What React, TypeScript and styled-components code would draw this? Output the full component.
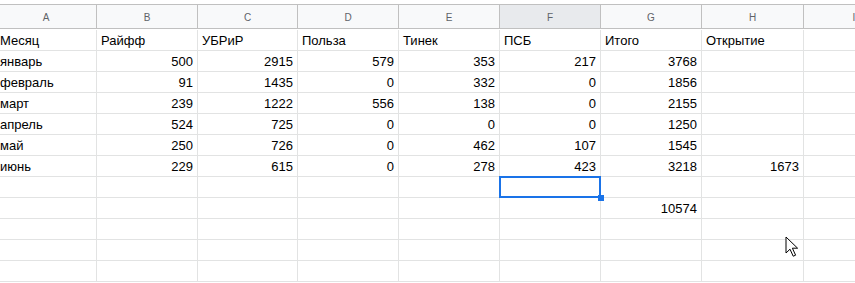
import React from 'react';
import styled, { createGlobalStyle } from 'styled-components';

const GlobalStyle = createGlobalStyle`
html, body {
    margin: 0;
    padding: 0;
    background: #ffffff;
}
* { box-sizing: border-box; }
`;

const COLS = ['A', 'B', 'C', 'D', 'E', 'F', 'G', 'H', 'I'];
const WIDTHS = [101, 101, 100, 101, 101, 101, 101, 102, 101];

type Value = string | number | null;

const ROWS: Value[][] = [
    ['Месяц', 'Райфф', 'УБРиР', 'Польза', 'Тинек', 'ПСБ', 'Итого', 'Открытие', null],
    ['январь', 500, 2915, 579, 353, 217, 3768, null, null],
    ['февраль', 91, 1435, 0, 332, 0, 1856, null, null],
    ['март', 239, 1222, 556, 138, 0, 2155, null, null],
    ['апрель', 524, 725, 0, 0, 0, 1250, null, null],
    ['май', 250, 726, 0, 462, 107, 1545, null, null],
    ['июнь', 229, 615, 0, 278, 423, 3218, 1673, null],
    [null, null, null, null, null, null, null, null, null],
    [null, null, null, null, null, null, 10574, null, null],
    [null, null, null, null, null, null, null, null, null],
    [null, null, null, null, null, null, null, null, null],
    [null, null, null, null, null, null, null, null, null],
];

// active cell: row index 7, column F
const SELECTED = { row: 7, col: 5 };

function Sheet() {
    return (
        <Viewport>
            <GlobalStyle />
            <TopStrip />
            <Grid widths={WIDTHS}>
                {COLS.map((c, i) => (
                    <ColHeader key={c} active={i === SELECTED.col}>{c}</ColHeader>
                ))}
                {ROWS.map((row, r) =>
                    row.map((v, c) => (
                        <Cell
                            key={r + '-' + c}
                            numeric={typeof v === 'number'}
                            selected={r === SELECTED.row && c === SELECTED.col}
                        >
                            {v == null ? '' : v}
                        </Cell>
                    ))
                )}
            </Grid>
            <Pointer width="14" height="22" viewBox="0 0 14 22">
                <path
                    d="M1 1 L1 17 L5 13.2 L8.2 20.2 L10.6 19.2 L7.4 12.2 L12.6 12.2 Z"
                    fill="#ffffff"
                    stroke="#000000"
                    strokeWidth="1"
                    strokeLinejoin="miter"
                />
            </Pointer>
        </Viewport>
    );
}

const Viewport = styled.div`
position: relative;
width: 855px;
height: 283px;
overflow: hidden;
background: #ffffff;
font-family: "Liberation Sans", Arial, sans-serif;
`;

const TopStrip = styled.div`
height: 4px;
background: #ffffff;
`;

interface GridProps {
    widths: number[];
}
const Grid = styled.div<GridProps>`
display: grid;
grid-template-columns: ${(props) => props.widths.map((w) => w + 'px').join(' ')};
grid-template-rows: 25px repeat(12, 21px);
margin-left: -4px;
width: max-content;
border-top: 1px solid #c0c0c0;
`;

interface ColHeaderProps {
    active?: boolean;
}
const ColHeader = styled.div<ColHeaderProps>`
display: flex;
align-items: center;
justify-content: center;
height: 24px;
background: ${(props) => (props.active ? '#e8eaed' : '#f8f9fa')};
border-right: 1px solid #c0c0c0;
border-bottom: 1px solid #c0c0c0;
font-size: 10px;
color: #5f6368;
padding-top: 1px;
`;

interface CellProps {
    numeric?: boolean;
    selected?: boolean;
}
const Cell = styled.div<CellProps>`
position: relative;
display: flex;
align-items: center;
justify-content: ${(props) => (props.numeric ? 'flex-end' : 'flex-start')};
height: 21px;
padding: 0 4px 0 4px;
border-right: 1px solid #e2e3e3;
border-bottom: 1px solid #e2e3e3;
font-size: 13px;
color: #000000;
white-space: nowrap;
${(props) => props.selected && `
    &::after {
        content: '';
        position: absolute;
        left: -1px;
        top: -1px;
        right: -1px;
        bottom: -1px;
        border: 2px solid #1a73e8;
    }
    &::before {
        content: '';
        position: absolute;
        right: -4px;
        bottom: -4px;
        width: 6px;
        height: 6px;
        background: #1a73e8;
        z-index: 2;
    }
`}
`;

const Pointer = styled.svg`
position: absolute;
left: 785px;
top: 236px;
`;

export default function App() {
    return <Sheet />;
}
